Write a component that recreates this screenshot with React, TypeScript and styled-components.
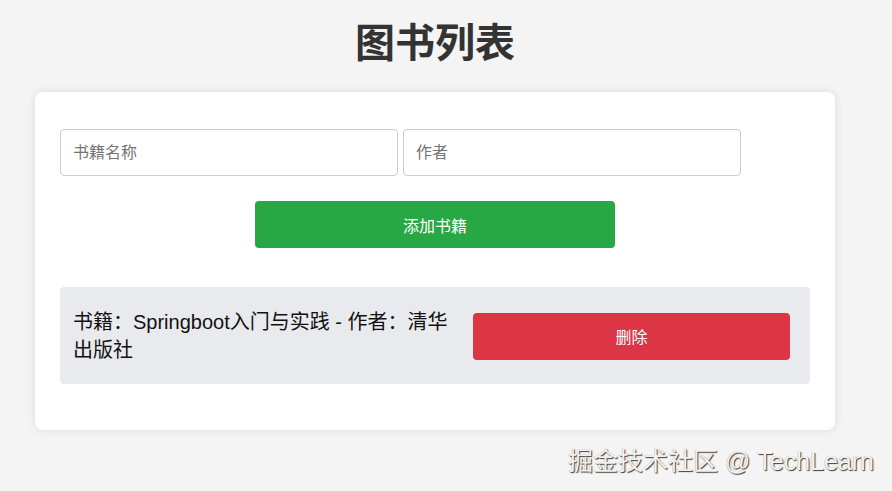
import React, { useState } from "react";
import styled, { createGlobalStyle } from "styled-components";

const Global = createGlobalStyle`
  html, body { margin: 0; padding: 0; }
  body {
    background: #f4f4f4;
    font-family: "Liberation Sans", "Noto Sans CJK SC", Arial, sans-serif;
    min-height: 491px;
  }
  * { box-sizing: border-box; }
`;

const Page = styled.div`
  position: relative;
  min-height: 491px;
  padding: 16px 57px 20px 35px;
`;

const Title = styled.h1`
  margin: 0 0 22px;
  text-align: center;
  font-family: "Liberation Sans", "Noto Sans CJK SC", sans-serif;
  font-size: 40px;
  line-height: 54px;
  font-weight: 700;
  color: #333;
`;

const Card = styled.div`
  width: 800px;
  background: #fff;
  border-radius: 8px;
  box-shadow: 0 0 10px rgba(0, 0, 0, 0.1);
  padding: 37px 25px 46px;
`;

const InputRow = styled.div`
  display: flex;
  gap: 5px;
`;

const Input = styled.input`
  width: 338px;
  height: 47px;
  padding: 0 12px;
  border: 1px solid #ccc;
  border-radius: 4px;
  font-family: "Liberation Sans", "Noto Sans CJK SC", sans-serif;
  font-size: 16px;
  color: #333;
  outline: none;
  &::placeholder { color: #757575; }
`;

const Button = styled.button<{ $variant: "add" | "delete" }>`
  display: block;
  height: 47px;
  border: none;
  border-radius: 4px;
  color: #fff;
  font-family: "Liberation Sans", "Noto Sans CJK SC", sans-serif;
  font-size: 16px;
  cursor: pointer;
  background: ${(p) => (p.$variant === "add" ? "#28a745" : "#dc3545")};
`;

const AddButton = styled(Button)`
  width: 360px;
  margin: 25px auto 39px;
`;

const DeleteButton = styled(Button)`
  width: 317px;
  flex-shrink: 0;
  margin-left: 13px;
`;

const List = styled.ul`
  list-style: none;
  margin: 0;
  padding: 0;
`;

const Item = styled.li`
  display: flex;
  align-items: center;
  background: #e9eaee;
  border-radius: 4px;
  padding: 21px 20px 20px 13px;
`;

const ItemText = styled.span`
  flex: 1;
  font-size: 20px;
  line-height: 28px;
  color: #111;
`;

const Watermark = styled.div`
  position: absolute;
  right: 18px;
  bottom: 14px;
  font-family: "Liberation Sans", "Noto Sans CJK SC", sans-serif;
  font-size: 25px;
  color: #f2f2f2;
  text-shadow: 1px 1px 1px rgba(0, 0, 0, 0.75), -0.5px -0.5px 0 rgba(0, 0, 0, 0.25);
  white-space: nowrap;
`;

export default function App() {
  const [books, setBooks] = useState([
    { name: "Springboot入门与实践", author: "清华出版社" },
  ]);
  return (
    <>
      <Global />
      <Page>
        <Title>图书列表</Title>
        <Card>
          <InputRow>
            <Input placeholder="书籍名称" />
            <Input placeholder="作者" />
          </InputRow>
          <AddButton $variant="add">添加书籍</AddButton>
          <List>
            {books.map((b, i) => (
              <Item key={i}>
                <ItemText>{`书籍：${b.name} - 作者：${b.author}`}</ItemText>
                <DeleteButton
                  $variant="delete"
                  onClick={() => setBooks(books.filter((_, j) => j !== i))}
                >
                  删除
                </DeleteButton>
              </Item>
            ))}
          </List>
        </Card>
        <Watermark>掘金技术社区 @ TechLearn</Watermark>
      </Page>
    </>
  );
}
